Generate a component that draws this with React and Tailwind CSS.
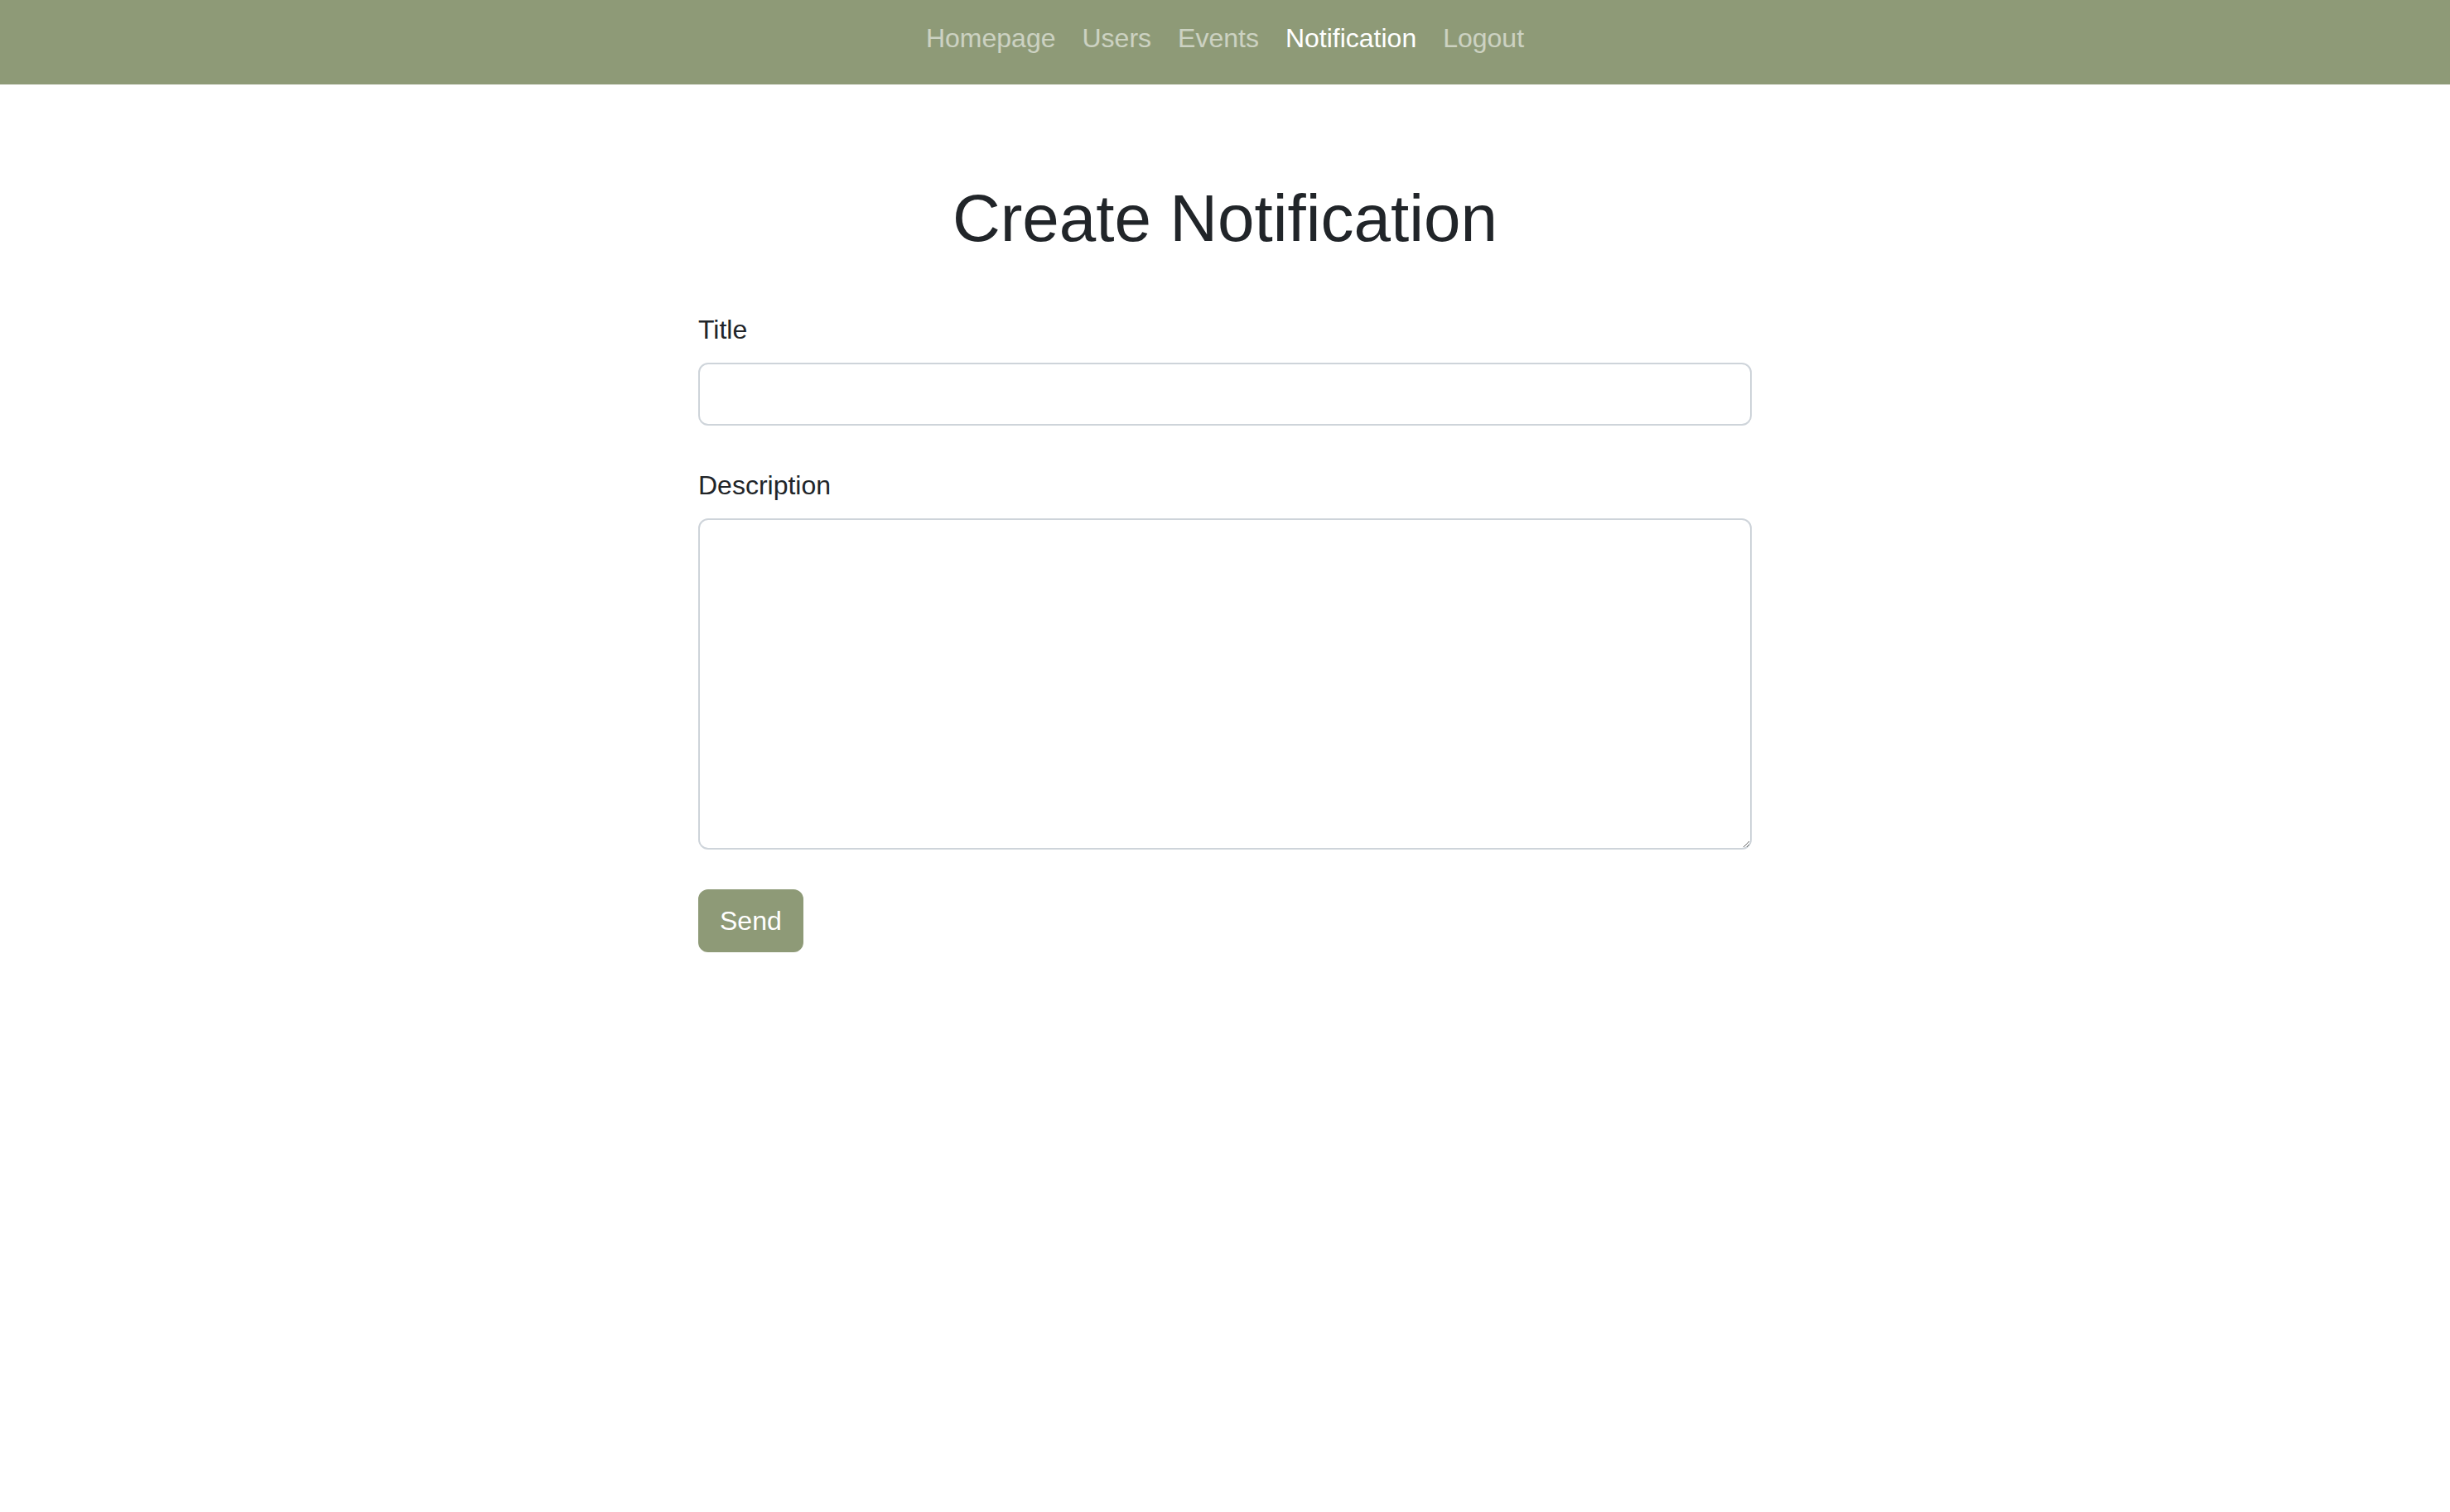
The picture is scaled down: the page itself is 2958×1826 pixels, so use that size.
const links = [
    { label: 'Homepage', active: false },
    { label: 'Users', active: false },
    { label: 'Events', active: false },
    { label: 'Notification', active: true },
    { label: 'Logout', active: false },
];

function Navbar() {
    return (
        <nav className="h-[102px] bg-[#8e9a77] pt-[22px]">
            <ul className="flex justify-center">
                {links.map((link) => (
                    <li key={link.label}>
                        <a
                            href="#"
                            className={`block px-4 text-[32px] leading-[48px] ${
                                link.active ? 'text-white' : 'text-white/55'
                            }`}
                        >
                            {link.label}
                        </a>
                    </li>
                ))}
            </ul>
        </nav>
    );
}

export default function App() {
    return (
        <div className="min-h-screen bg-white font-['Liberation_Sans',Arial,sans-serif] text-[#212529]">
            <Navbar />
            <main className="mx-auto w-[1272px] pt-[114px]">
                <h1 className="text-center text-[80px] leading-[96px] font-medium">
                    Create Notification
                </h1>
                <form className="mt-[62px]" onSubmit={(e) => e.preventDefault()}>
                    <div className="mb-12">
                        <label className="mb-4 block text-[32px] leading-[48px]">Title</label>
                        <input
                            type="text"
                            className="block h-[76px] w-full rounded-xl border-2 border-[#ced4da] px-6 text-[32px] outline-none"
                        />
                    </div>
                    <div className="mb-12">
                        <label className="mb-4 block text-[32px] leading-[48px]">Description</label>
                        <textarea className="block h-[400px] w-full rounded-xl border-2 border-[#ced4da] px-6 py-3 text-[32px] outline-none" />
                    </div>
                    <button
                        type="submit"
                        className="h-[76px] rounded-xl border-2 border-[#8e9a77] bg-[#8e9a77] px-6 text-[32px] leading-[48px] text-white"
                    >
                        Send
                    </button>
                </form>
            </main>
        </div>
    );
}
